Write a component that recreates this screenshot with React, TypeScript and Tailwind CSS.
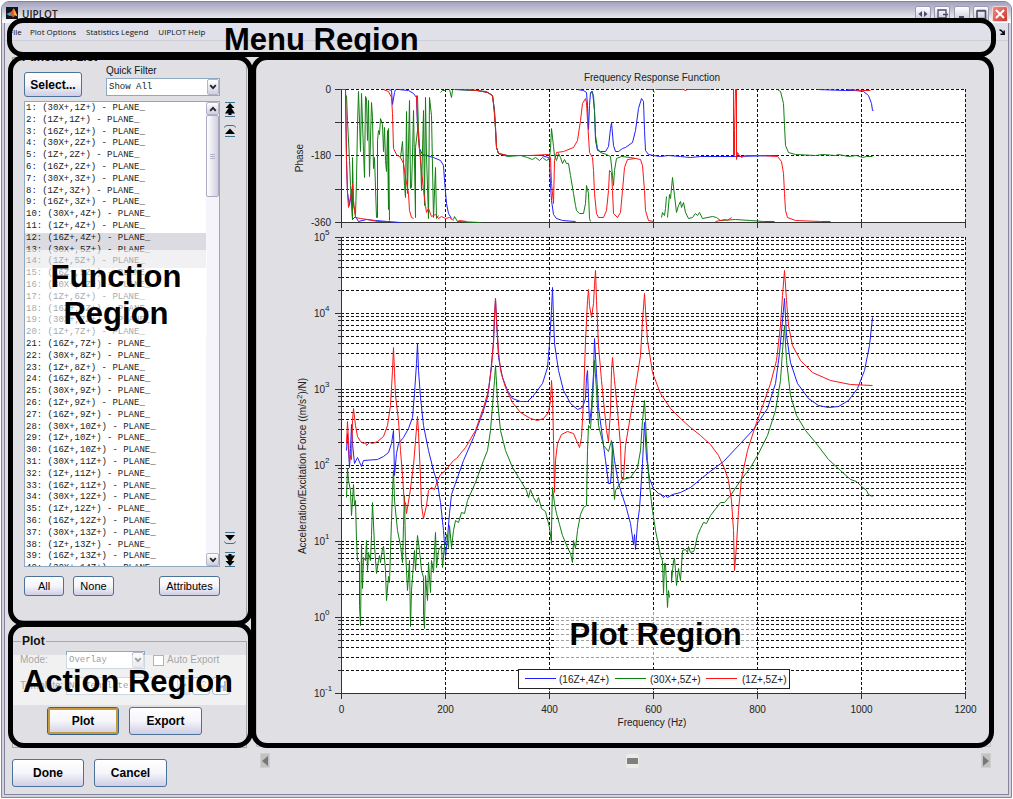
import type { ReactNode } from 'react';
import { clsx } from 'clsx';

const SANS = "font-['Liberation_Sans',Arial,sans-serif]";
const MONO = "font-['Liberation_Mono','Courier_New',monospace]";

const DRIVE_POINTS = ['30X+', '1Z+', '16Z+'];

// Three excitation points for every response point, numbered from 1
const functions = Array.from({ length: 40 }, (_, i) => ({
  id: i + 1,
  label: `${i + 1}: (${DRIVE_POINTS[i % 3]},${Math.floor(i / 3) + 1}Z+) - PLANE_`,
  selected: i >= 11 && i <= 13,
}));

const BLUE = '#2020ff';
const GREEN = '#108010';
const RED = '#ff1414';

const X_TICKS = [0, 200, 400, 600, 800, 1000, 1200];
const DECADES = [5, 4, 3, 2, 1, 0, -1];

const xOf = (hz: number) => Math.round(341 + hz * 0.52) + 0.5;
const phaseY = (deg: number) => Math.round(89 - deg * 0.3694) + 0.5;
const magY = (value: number) => Math.round(617 - Math.log10(value) * 76) + 0.5;

interface Trace {
  color: string;
  points: string;
}

const phaseTraces: Trace[] = [
  // (16Z+,4Z+)
  { color: BLUE, points: '341,89 345,89 346,160 347,192 349,205 351,190 352,219 355,216 358,221 366,219 375,220 387,221 400,222' },
  { color: BLUE, points: '388,89 391,90 392,104 394,92 395,89' },
  { color: BLUE, points: '398,89 408,90 413,93 416,97 417,127 419,148 422,154 433,157 440,160 443,165 444,180 446,203 448,213 451,218' },
  { color: BLUE, points: '454,89 477,90 487,92 492,95 494,110 495,127 496,147 498,153 507,155 530,155 541,155 548,157 549,160 550,185 551,200 553,214 556,218 562,220 575,221' },
  { color: BLUE, points: '577,89 583,90 586,92 587,105 588,129 589,105 590,92 592,91 594,110 595,140 597,150 600,151 605,151 608,146 610,128 611,122 613,145 615,151 618,151 622,148 625,147 632,142 635,130 638,108 641,98 643,101 644,130 645,150 648,154 653,155 660,156 668,155 680,156 690,157 700,156 735,156 777,155' },
  { color: BLUE, points: '817,89 845,90 855,90 863,91 868,95 871,103 872,110 873,110' },
  // (30X+,5Z+)
  { color: GREEN, points: '346,95 347,120 349,160 350,185 352,219 352,157 353,205 355,215 356,180 357,125 358,91 360,151 361,93 363,151 364,177 365,96 366,98 367,140 368,100 369,176 371,102 372,117 373,168 374,157 376,217 377,217 377,140 378,130 379,134 380,118 382,124 383,151 384,127 385,160 386,171 387,130 388,209 388,128 389,220' },
  { color: GREEN, points: '400,157 402,141 404,185 405,197 406,111 407,193 409,100 410,188 411,187 412,155 413,110 415,217 415,147 417,130' },
  { color: GREEN, points: '417,95 418,130 419,148 420,155 421,190 423,110 424,205 425,97 426,155 428,218 429,97 431,115 433,217 435,167 436,218 438,215' },
  { color: GREEN, points: '440,92 442,90 445,90' },
  { color: GREEN, points: '449,89 451,97 452,90 453,89' },
  { color: GREEN, points: '453,219 454,216 457,221 480,222' },
  { color: GREEN, points: '456,89 475,90 486,91 492,95 494,112 495,130 496,147 498,153 507,156 520,155 527,157 532,159 535,157 539,160 542,157 546,160 549,158 550,148 551,128 553,146 554,155 556,160 558,153 560,157 562,163 564,159 566,163 568,163 570,175 573,193 575,205 576,210 579,213 583,213 585,203 586,185 588,193 589,218 590,221' },
  { color: GREEN, points: '590,94 591,91 593,95 594,110 595,135 597,148 600,152 606,154 610,156 612,175 613,185 614,170 616,158 621,156 630,157 635,158' },
  { color: GREEN, points: '648,89 652,89 654,92' },
  { color: GREEN, points: '661,217 662,212 664,215 665,208 666,196' },
  { color: GREEN, points: '667,217 669,194 670,198 672,177 674,195 676,212 678,205 680,201 681,207 683,202 685,212 688,218 692,217 695,213 697,215 699,212 702,218 712,216 716,217 720,220 735,219 750,220 763,221 774,221' },
  { color: GREEN, points: '777,89 780,91 783,103 784,125 785,145 788,152 795,154 815,155 822,154 835,155 838,154 848,156 856,155 862,157 866,156 872,156' },
  // (1Z+,5Z+)
  { color: RED, points: '341,89 345,89 346,160 347,193 348,207 350,197 351,193 352,183 353,200 355,217 360,218 367,219 377,221 387,221' },
  { color: RED, points: '383,89 388,91 391,97 392,113 393,148 396,154 400,157 403,163 405,177 408,193 409,210 411,217 413,218' },
  { color: RED, points: '416,95 417,120 419,150 421,170 423,190 425,205 426,212 428,208 431,216 435,214 438,218 441,216 445,218 449,217 453,220' },
  { color: RED, points: '457,221 459,220 466,221' },
  { color: RED, points: '465,89 477,90 487,92 492,95 493,103 495,127 496,147 498,153 507,155 530,155 548,154 550,157 551,183 553,203 554,160 556,152 563,151 573,147 577,140 580,120 582,103 585,98 586,102 587,120 589,152 592,157 593,170 594,193 596,213 598,217 603,217 606,210 608,190 609,170 611,172 612,190 613,213 617,217 620,212 622,190 624,167 627,159 635,158 640,159 642,165 644,190 645,210 648,220 653,221' },
  { color: RED, points: '655,89 683,89 685,90 687,89 710,89' },
  { color: RED, points: '715,221 725,219 727,220 731,217' },
  { color: RED, points: '732,89 733,89 733,155 734,155 734,130 735,89 736,89 736,159 737,152 739,155 741,157 745,155 760,155 777,156 781,161 783,173 784,193 785,210 787,217 795,220 820,221 830,221' },
  { color: RED, points: '847,89 862,90 870,90' },
];

const magTraces: Trace[] = [
  { color: BLUE, points: '346,450 347,433 349,467 350,448 351,424 352,443 354,463 357,457 361,466 363,460 377,459 383,456 388,452 391,443 393,430 394,475 396,453 398,443 403,437 408,428 412,417 414,393 416,363 417,343 418,370 420,397 423,425 428,450 433,470 437,483 440,502 443,530 445,556 447,537 449,513 451,494 457,477 463,460 473,437 482,413 487,397 490,373 493,343 494,317 495,298 496,320 498,357 502,377 507,390 512,398 520,401 527,401 533,395 542,383 547,367 549,343 551,310 552,287 553,317 554,343 558,370 563,390 570,403 577,409 582,407 585,398 586,377 587,370 588,397 589,423 591,407 593,373 594,338 596,373 598,407 602,437 605,460 608,483 610,483 611,470 612,443 614,460 618,483 626,508 630,523 633,544 634,534 635,549 637,523 639,508 642,463 644,422 646,457 649,478 653,488 658,493 661,494 663,497 665,495 667,497 672,494 680,492 690,487 707,473 723,461 740,443 753,429 767,408 775,383 779,353 782,320 784,298 786,335 790,362 797,383 808,398 818,405 828,407 838,406 848,400 857,388 864,370 869,345 872,317' },
  { color: GREEN, points: '346,497 347,468 348,480 350,490 351,515 353,484 354,505 355,500 356,540 357,560 359,562 359,605 360,625 361,545 362,588 363,557 365,560 366,540 367,570 368,552 370,560 371,535 372,502 374,545 376,573 378,560 379,555 380,562 382,548 383,546 385,570 386,600 388,576 389,582 390,550 391,520 392,490 393,470 394,500 397,530 400,545 402,562 403,525 404,495 405,550 407,590 409,560 410,626 411,590 413,563 414,550 415,570 417,535 419,550 421,570 423,577 423,615 424,628 425,575 427,600 428,562 430,592 431,560 433,572 434,550 435,532 436,567 438,550 441,545 442,567 444,545 446,534 448,547 449,525 451,547 453,530 455,520 458,522 461,512 464,513 467,500 475,482 483,460 487,450 490,430 492,405 494,380 495,365 497,400 500,430 505,450 512,467 520,480 526,490 528,497 530,489 533,497 536,502 538,497 541,508 545,511 549,527 551,543 551,530 552,487 554,503 556,513 559,524 562,535 567,547 570,553 572,562 573,540 575,548 577,530 580,514 583,507 586,505 587,450 588,425 590,428 592,400 594,360 596,390 598,425 603,445 608,451 611,440 612,450 613,483 614,499 615,490 617,487 622,479 630,477 637,467 640,450 642,420 644,400 645,420 647,460 649,485 652,510 655,530 660,555 662,560 663,593 664,563 665,563 667,607 668,590 669,597' },
  { color: GREEN, points: '671,570 671,582 673,560 674,558 675,570 676,585 678,568 680,580 682,550 685,549 687,552 688,546 690,552 693,551 694,549 697,535 700,528 703,522 706,523 710,515 720,502 724,502 730,495 740,480 750,467 757,455 767,435 775,410 780,380 782,350 784,325 786,360 790,395 796,415 805,430 815,442 828,459 840,470 850,479 856,481 860,485 866,490 868,494 872,496' },
  { color: RED, points: '346,443 347,421 348,440 349,462 350,455 351,459 352,420 353,408 355,425 357,436 360,441 363,443 365,442 366,445 369,442 372,443 377,441 383,436 387,425 390,405 392,370 393,347 394,372 395,395 398,420 400,450 402,475 404,505 405,502 406,513 409,495 411,480 413,465 415,440 417,416 418,432 420,477 421,505 423,518 426,505 428,490 431,487 434,489 437,480 440,474 445,470 453,460 456,458 465,447 475,430 483,407 488,390 491,367 493,340 494,315 495,298 496,320 498,350 500,370 505,387 512,402 520,412 530,418 537,420 543,418 548,412 550,400 551,380 552,395 553,440 554,492 555,460 557,443 561,434 567,431 573,433 576,440 579,447 581,437 583,400 585,340 587,300 588,289 589,305 591,317 593,303 594,285 595,270 596,300 598,345 601,380 604,410 606,430 608,441 610,410 611,370 612,357 614,380 617,410 620,445 621,478 623,478 625,445 630,415 635,387 640,355 642,320 644,293 645,310 647,340 652,372 660,393 670,408 680,418 690,427 700,435 710,444 718,455 724,468 728,480 731,500 733,530 734,570 736,545 738,510 741,478 747,450 755,425 763,403 770,383 776,360 780,325 782,295 784,270 786,300 788,325 792,345 800,360 812,372 830,380 850,384 872,385' },
];

const legend = [
  { color: BLUE, label: '(16Z+,4Z+)', x: 525, textX: 559 },
  { color: GREEN, label: '(30X+,5Z+)', x: 615, textX: 650 },
  { color: RED, label: '(1Z+,5Z+)', x: 706, textX: 742 },
];

function Traces({ items }: { items: Trace[] }) {
  return (
    <g fill="none" strokeWidth="1" strokeLinejoin="bevel" transform="translate(.5 .5)">
      {items.map((t, i) => (
        <polyline key={i} points={t.points} stroke={t.color} />
      ))}
    </g>
  );
}

function FrequencyChart() {
  const minors = DECADES.slice(1).flatMap((d) => [2, 3, 4, 5, 6, 7, 8, 9].map((m) => m * 10 ** d));

  return (
    <svg
      viewBox="257 60 733 686"
      className={clsx('block h-full w-full', SANS)}
      fontSize="10"
      fill="#222"
      role="img"
      aria-label="Frequency Response Function"
    >
      <text x="652" y="81" textAnchor="middle">Frequency Response Function</text>

      {/* Phase */}
      <rect x="341" y="89" width="624" height="133" fill="#fff" />
      <g stroke="#111" strokeDasharray="3 2">
        {[0, -90, -180, -270].map((d) => (
          <line key={d} x1="341" x2="965" y1={phaseY(d)} y2={phaseY(d)} />
        ))}
        {X_TICKS.slice(1).map((f) => (
          <line key={f} x1={xOf(f)} x2={xOf(f)} y1="89" y2="222" />
        ))}
      </g>
      <g stroke="#333">
        {[0, -90, -180, -270, -360].map((d) => (
          <line key={d} x1="335" x2="341" y1={phaseY(d)} y2={phaseY(d)} />
        ))}
        {X_TICKS.map((f) => (
          <line key={f} x1={xOf(f)} x2={xOf(f)} y1="219" y2="228" />
        ))}
        <line x1="341.5" x2="341.5" y1="89" y2="222" />
        <line x1="341" x2="966" y1="222.5" y2="222.5" />
      </g>
      {[0, -180, -360].map((d) => (
        <text key={d} x="331" y={phaseY(d) + 3} textAnchor="end">{d}</text>
      ))}
      <text transform="translate(303 158) rotate(-90)" textAnchor="middle">Phase</text>
      <Traces items={phaseTraces} />

      {/* Magnitude */}
      <rect x="341" y="237" width="624" height="456" fill="#fff" />
      <g stroke="#111" strokeDasharray="3 2">
        {DECADES.slice(0, -1).map((d) => (
          <line key={d} x1="341" x2="965" y1={magY(10 ** d)} y2={magY(10 ** d)} />
        ))}
        {minors.map((v) => (
          <line key={v} x1="341" x2="965" y1={magY(v)} y2={magY(v)} />
        ))}
        {X_TICKS.slice(1).map((f) => (
          <line key={f} x1={xOf(f)} x2={xOf(f)} y1="237" y2="693" />
        ))}
      </g>
      <g stroke="#333">
        {DECADES.map((d) => (
          <line key={d} x1="335" x2="341" y1={magY(10 ** d)} y2={magY(10 ** d)} />
        ))}
        {minors.map((v) => (
          <line key={v} x1="338" x2="341" y1={magY(v)} y2={magY(v)} />
        ))}
        {X_TICKS.map((f) => (
          <line key={f} x1={xOf(f)} x2={xOf(f)} y1="691" y2="699" />
        ))}
        <line x1="341.5" x2="341.5" y1="237" y2="693" />
        <line x1="341" x2="966" y1="693.5" y2="693.5" />
      </g>
      {DECADES.map((d) => (
        <g key={d}>
          <text x="325" y={magY(10 ** d) + 3} textAnchor="end">10</text>
          <text x="325" y={magY(10 ** d) - 3} fontSize="8">{d}</text>
        </g>
      ))}
      {X_TICKS.map((f) => (
        <text key={f} x={xOf(f)} y="713" textAnchor="middle">{f}</text>
      ))}
      <text x="652" y="726" textAnchor="middle">Frequency (Hz)</text>
      <text transform="translate(306 466) rotate(-90)" textAnchor="middle">
        Acceleration/Excitation Force ((m/s<tspan dy="-4" fontSize="8">2</tspan><tspan dy="4">)/N)</tspan>
      </text>
      <Traces items={magTraces} />

      {/* Legend */}
      <rect x="518.5" y="669.5" width="271" height="19" fill="#fff" stroke="#222" />
      {legend.map((l) => (
        <g key={l.label}>
          <line x1={l.x} x2={l.x + 31} y1="678.5" y2="678.5" stroke={l.color} />
          <text x={l.textX} y="683">{l.label}</text>
        </g>
      ))}
    </svg>
  );
}

// Thick rounded outline drawn over a part of the window
function Outline({ className }: { className: string }) {
  return <div className={clsx('pointer-events-none absolute z-10 rounded-[16px] border-[5px] border-black', className)} />;
}

function RegionLabel({ className, children }: { className: string; children: ReactNode }) {
  return (
    <div
      className={clsx(
        'pointer-events-none absolute z-20 text-center text-[31px] leading-[37px] font-bold whitespace-nowrap text-black',
        className
      )}
    >
      {children}
    </div>
  );
}

function XpButton({ children, className, focused }: { children: ReactNode; className: string; focused?: boolean }) {
  return (
    <button
      type="button"
      className={clsx(
        'flex items-center justify-center rounded-[3px] border bg-gradient-to-b from-white via-[#f5f5fb] to-[#cfcee4] text-black',
        focused ? 'border-[#31618f] ring-2 ring-[#c99a3c] ring-inset' : 'border-[#4b7399]',
        className
      )}
    >
      {children}
    </button>
  );
}

function Combo({ id, value, className, label }: { id: string; value: string; className: string; label?: string }) {
  return (
    <div className={clsx('relative flex h-[18px] border border-[#8fa9c0] bg-white', className)}>
      <select
        id={id}
        aria-label={label}
        defaultValue={value}
        className={clsx('min-w-0 flex-1 appearance-none bg-transparent pl-[2px] text-[9px] leading-[16px] text-[#222] outline-none', MONO)}
      >
        <option>{value}</option>
      </select>
      <span className="pointer-events-none flex w-3 items-center justify-center rounded-[2px] border border-[#b4b4c8] bg-gradient-to-b from-white to-[#d0cfe0]">
        <Chevron />
      </span>
    </div>
  );
}

function Chevron({ up }: { up?: boolean }) {
  return (
    <svg viewBox="0 0 8 6" className={clsx('h-[6px] w-2 shrink-0', up && 'rotate-180')} fill="none" stroke="#222" strokeWidth="1.8">
      <path d="M1.2 1.2 4 4.2 6.8 1.2" />
    </svg>
  );
}

// List paging buttons: one arrow moves by a step, two arrows jump to the end
function PageButton({ label, double, down }: { label: string; double?: boolean; down?: boolean }) {
  return (
    <button type="button" aria-label={label} className="block w-3">
      <svg viewBox={double ? '0 0 12 15' : '0 0 12 12'} className={clsx('block w-3', double ? 'h-[15px]' : 'h-3', down && 'rotate-180')}>
        <path d={double ? 'M1 .5h10M1 14.5h10' : 'M.5 2.5Q1 .5 3 .5h6q2 0 2.500 2M1 11.500h10'} stroke="#3f7193" fill="none" />
        {double ? (
          <path d="M6 1 10.500 6H7.500L11 11.500H7.500V13h-3v-1.500H1L4.500 6h-3Z" fill="#000" />
        ) : (
          <path d="M6 3.500 11 9H1Z" fill="#000" />
        )}
      </svg>
    </button>
  );
}

function TitleButton({ label, close, className, children }: { label: string; close?: boolean; className?: string; children: ReactNode }) {
  return (
    <button
      type="button"
      aria-label={label}
      className={clsx(
        'h-4 w-4 rounded-[2px] border',
        close ? 'border-[#f3d5d5] bg-gradient-to-br from-[#f08c84] to-[#c9322c]' : 'border-[#9a99b3] bg-gradient-to-b from-white to-[#c6c5d8]',
        className
      )}
    >
      <svg viewBox="0 0 14 14" className="block h-full w-full" fill="none" stroke={close ? '#fff' : '#4a4a6a'} strokeWidth="1.6">
        {children}
      </svg>
    </button>
  );
}

function TitleBar() {
  return (
    <header className="flex h-[21px] items-start rounded-t-md bg-gradient-to-b from-[#a3a2bd] via-[#cfcedc] to-white pr-[3px] pl-[4px]">
      <svg viewBox="0 0 12 12" className="mt-[5px] h-3 w-3" aria-hidden="true">
        <rect width="12" height="12" fill="#0b1420" />
        <path d="M0.500 7 4 5.300 6 7.500 3.500 9Z" fill="#4aa0c8" />
        <path d="M4 5.500Q6 4.500 7.500 1.200 9 3 11.500 9.500 9.500 7.500 7 10.500 6 8 3.500 9Q6 7.500 4 5.500Z" fill="#e0592a" />
        <path d="M7.500 1.200Q9 3 11.500 9.500 9 7 8 8Z" fill="#f6b04a" />
      </svg>
      <h1 className="mt-[5px] ml-[4px] flex-1 font-['Open_Sans',sans-serif] text-[10px] leading-[14px] font-semibold text-[#222]">UIPLOT</h1>
      <div className="mt-1 flex gap-[3px]">
        <TitleButton label="Switch monitor">
          <path d="M6 4v6L2.500 7ZM8 4v6l3.500-3Z" fill="#4a4a6a" stroke="none" />
        </TitleButton>
        <TitleButton label="Undock">
          <path d="M3 3h8v8H3ZM8 7.500h5" strokeWidth="1.300" />
        </TitleButton>
        <TitleButton label="Minimize" className="ml-px">
          <path d="M4 10h5" strokeWidth="2" />
        </TitleButton>
        <TitleButton label="Maximize">
          <path d="M3 4h8.500v7.500H3ZM3 3.500h8.500" />
        </TitleButton>
        <TitleButton label="Close" close>
          <path d="M3 3l8 8M11 3l-8 8" strokeWidth="2" />
        </TitleButton>
      </div>
    </header>
  );
}

function MenuBar() {
  return (
    <nav className="relative flex h-[18px] items-center border-b border-[#cfced6] bg-[#dfe0ea] pr-[3px] pl-[4px] font-['Open_Sans',sans-serif] text-[8px] leading-[12px] text-[#111]">
      <button type="button" className="w-[21px] text-left">File</button>
      <button type="button" className="mr-[10px]">Plot Options</button>
      <button type="button" className="mr-[10px]">Statistics Legend</button>
      <button type="button">UIPLOT Help</button>
      <svg viewBox="0 0 6 6" className="ml-auto h-[6px] w-[6px]" fill="none" stroke="#000" strokeWidth="1.4" aria-hidden="true">
        <path d="M.5 1Q2.500 .8 4.500 4.500M5.200 1.500V5.200H1.500" />
      </svg>
      <Outline className="-top-[5px] right-[12px] -bottom-[17px] left-[2px]" />
      <RegionLabel className={clsx('-top-[2px] left-[219px]', SANS)}>Menu Region</RegionLabel>
    </nav>
  );
}

function FunctionPanel() {
  return (
    <fieldset className="relative mt-[9px] flex min-h-0 flex-1 flex-col border border-[#a7a6ab] pr-[9px] pb-6 pl-[11px]">
      <legend className="-ml-[3px] px-px text-[12px] leading-[14px] font-bold">Function List</legend>

      <div className="flex items-start pr-[17px]">
        <XpButton className="mt-2 h-[25px] w-[58px] text-[12px] font-bold">Select...</XpButton>
        <div className="ml-6 flex-1">
          <label htmlFor="quick-filter" className="mt-px block pb-px text-[10px] leading-[12px]">Quick Filter</label>
          <Combo id="quick-filter" value="Show All" className="w-full" />
        </div>
      </div>

      <div className="mt-1 flex min-h-0 flex-1 gap-1">
        <div className="relative flex min-w-0 flex-1 overflow-hidden border border-[#8fa9c0] bg-white">
          <ul
            role="listbox"
            aria-label="Functions"
            aria-multiselectable="true"
            className={clsx('grid h-[473px] flex-1 auto-rows-fr pt-px text-[9px] leading-[11px] whitespace-pre text-[#222]', MONO)}
          >
            {functions.map((f) => (
              <li key={f.id} role="option" aria-selected={f.selected} className={clsx('pl-px', f.selected && 'bg-[#dcdbe2]')}>
                {f.label}
              </li>
            ))}
          </ul>
          <div className="flex w-[13px] flex-col bg-[#f4f4fa]">
            <button type="button" aria-label="Scroll up" className="flex h-[13px] items-center justify-center rounded-[2px] border border-[#b4b4c8] bg-gradient-to-b from-white to-[#d0cfe0]">
              <Chevron up />
            </button>
            <div className="flex h-[82px] flex-col items-center justify-center gap-px rounded-[2px] border border-[#a9a8c0] bg-gradient-to-r from-white to-[#d0cfe0]">
              <i className="h-px w-[5px] bg-[#b3b2c6]" />
              <i className="h-px w-[5px] bg-[#b3b2c6]" />
              <i className="h-px w-[5px] bg-[#b3b2c6]" />
            </div>
            <button type="button" aria-label="Scroll down" className="mt-auto flex h-[13px] items-center justify-center rounded-[2px] border border-[#b4b4c8] bg-gradient-to-b from-white to-[#d0cfe0]">
              <Chevron />
            </button>
          </div>
          <RegionLabel className="top-[148px] right-[12px] left-0 bg-white/60 pt-[8px] pb-[5px]">
            Function
            <br />
            Region
          </RegionLabel>
        </div>
        <div className="flex flex-col justify-between pt-px pr-px">
          <div className="flex flex-col gap-2">
            <PageButton label="First" double />
            <PageButton label="Previous" />
          </div>
          <div className="flex flex-col gap-2">
            <PageButton label="Next" down />
            <PageButton label="Last" double down />
          </div>
        </div>
      </div>

      <div className="mt-[9px] flex gap-[9px] pr-[17px] text-[11px]">
        <XpButton className="h-5 w-[40px]">All</XpButton>
        <XpButton className="h-5 w-[41px]">None</XpButton>
        <XpButton className="ml-auto h-5 w-[61px]">Attributes</XpButton>
      </div>

      <Outline className="-top-[9px] -right-[7px] -bottom-[6px] -left-[5px]" />
    </fieldset>
  );
}

function ActionPanel() {
  return (
    <fieldset className="relative mt-[13px] border border-[#a7a6ab] pb-3 pl-[7px]">
      <legend className="ml-px px-px text-[12px] leading-[14px] font-bold">Plot</legend>

      <div className="mt-[3px] flex items-center text-[10px] leading-[12px] text-[#333]">
        <label htmlFor="mode" className="w-[46px]">Mode:</label>
        <Combo id="mode" value="Overlay" className="w-[79px]" />
        <input id="auto-export" type="checkbox" className="ml-2 h-[11px] w-[11px] appearance-none border border-[#31618f] bg-white" />
        <label htmlFor="auto-export" className="ml-[3px]">Auto Export</label>
      </div>

      <div className="mt-2 flex items-center text-[10px] leading-[12px] text-[#333]">
        <label htmlFor="template" className="w-[46px]">Template:</label>
        <Combo id="template" value="No Template" className="w-[124px]" />
        <button type="button" aria-label="Open template" className="ml-[2px] flex h-[18px] w-[18px] items-center justify-center rounded-[3px] border border-[#4b7399] bg-white">
          <svg viewBox="0 0 12 12" className="h-3 w-3">
            <path d="M1 3h4l1 1.500h4V11H1Z" fill="#e8c840" />
            <path d="M3 6.500h9L10 11H1Z" fill="#f8e48a" />
            <path d="M7 2q2-2 4 1" stroke="#3a8a3a" fill="none" />
          </svg>
        </button>
        <button type="button" aria-label="Save template" className="ml-[2px] flex h-[18px] w-[18px] items-center justify-center rounded-[3px] border border-[#4b7399] bg-white">
          <svg viewBox="0 0 12 12" className="h-3 w-3">
            <path d="M1 1h10v10H1Z" fill="#3f6fc0" />
            <path d="M3 1h6v4.500H3Z" fill="#fff" />
            <path d="M4 7.500h4V11H4Z" fill="#dde" />
          </svg>
        </button>
      </div>

      <div className="mt-3 flex gap-[10px] pl-[27px] text-[12px] font-bold">
        <XpButton className="h-7 w-[72px]" focused>Plot</XpButton>
        <XpButton className="h-7 w-[73px]">Export</XpButton>
      </div>

      <Outline className="-top-[26px] -right-[7px] -bottom-px -left-[5px]" />
      <RegionLabel className="top-[7px] right-0 left-0 bg-white/55 pt-[8px] pr-[3px] pb-[5px]">Action Region</RegionLabel>
    </fieldset>
  );
}

function PlotPanel() {
  return (
    <section className="ml-[9px] flex min-w-0 flex-1 flex-col pt-[18px] pr-[17px] pb-[26px]">
      <div className="relative min-h-0 flex-1 border border-[#c3c2c8]">
        <FrequencyChart />
        <Outline className="-top-[5px] -right-[4px] -bottom-[2px] -left-[6px]" />
        <RegionLabel className="top-[552px] left-[298px] w-[201px] bg-white/60 pt-[4px] pb-[10px]">Plot Region</RegionLabel>
      </div>
      <div className="mt-[6px] flex h-[15px] items-stretch pl-1">
        <button type="button" aria-label="Scroll left" className="flex w-[10px] items-center justify-center border border-[#d0cfc8] bg-[#c2c2c4]">
          <svg viewBox="0 0 6 10" className="h-[10px] w-[6px]" fill="#777">
            <path d="M6 0v10L0 5Z" />
          </svg>
        </button>
        <input
          type="range"
          aria-label="Plot position"
          defaultValue={51}
          className="min-w-0 flex-1 appearance-none bg-transparent [&::-webkit-slider-thumb]:h-[14px] [&::-webkit-slider-thumb]:w-[13px] [&::-webkit-slider-thumb]:appearance-none [&::-webkit-slider-thumb]:rounded-[3px] [&::-webkit-slider-thumb]:border-x [&::-webkit-slider-thumb]:border-y-4 [&::-webkit-slider-thumb]:border-[#ecece6] [&::-webkit-slider-thumb]:bg-[#808080]"
        />
        <button type="button" aria-label="Scroll right" className="flex w-[10px] items-center justify-center border border-[#d0cfc8] bg-[#c2c2c4]">
          <svg viewBox="0 0 6 10" className="h-[10px] w-[6px]" fill="#777">
            <path d="M0 0v10l6-5Z" />
          </svg>
        </button>
      </div>
    </section>
  );
}

export default function App() {
  return (
    <div className={clsx('flex h-screen min-h-[700px] flex-col bg-white p-px text-[#111]', SANS)}>
      <div className="flex min-h-0 flex-1 flex-col rounded-t-lg border border-[#85849d] bg-[#d3d2de]">
        <TitleBar />
        <div className="mx-[2px] mb-[2px] flex min-h-0 flex-1 flex-col border-x border-b border-[#85849d] bg-[#e0dfe3]">
          <MenuBar />
          <main className="flex min-h-0 flex-1">
            <div className="flex w-[242px] shrink-0 flex-col pb-[7px] pl-[7px]">
              <FunctionPanel />
              <ActionPanel />
              <div className="mt-[11px] flex gap-[10px] text-[12px] font-bold">
                <XpButton className="h-7 w-[72px]">Done</XpButton>
                <XpButton className="h-7 w-[73px]">Cancel</XpButton>
              </div>
            </div>
            <PlotPanel />
          </main>
        </div>
      </div>
    </div>
  );
}
